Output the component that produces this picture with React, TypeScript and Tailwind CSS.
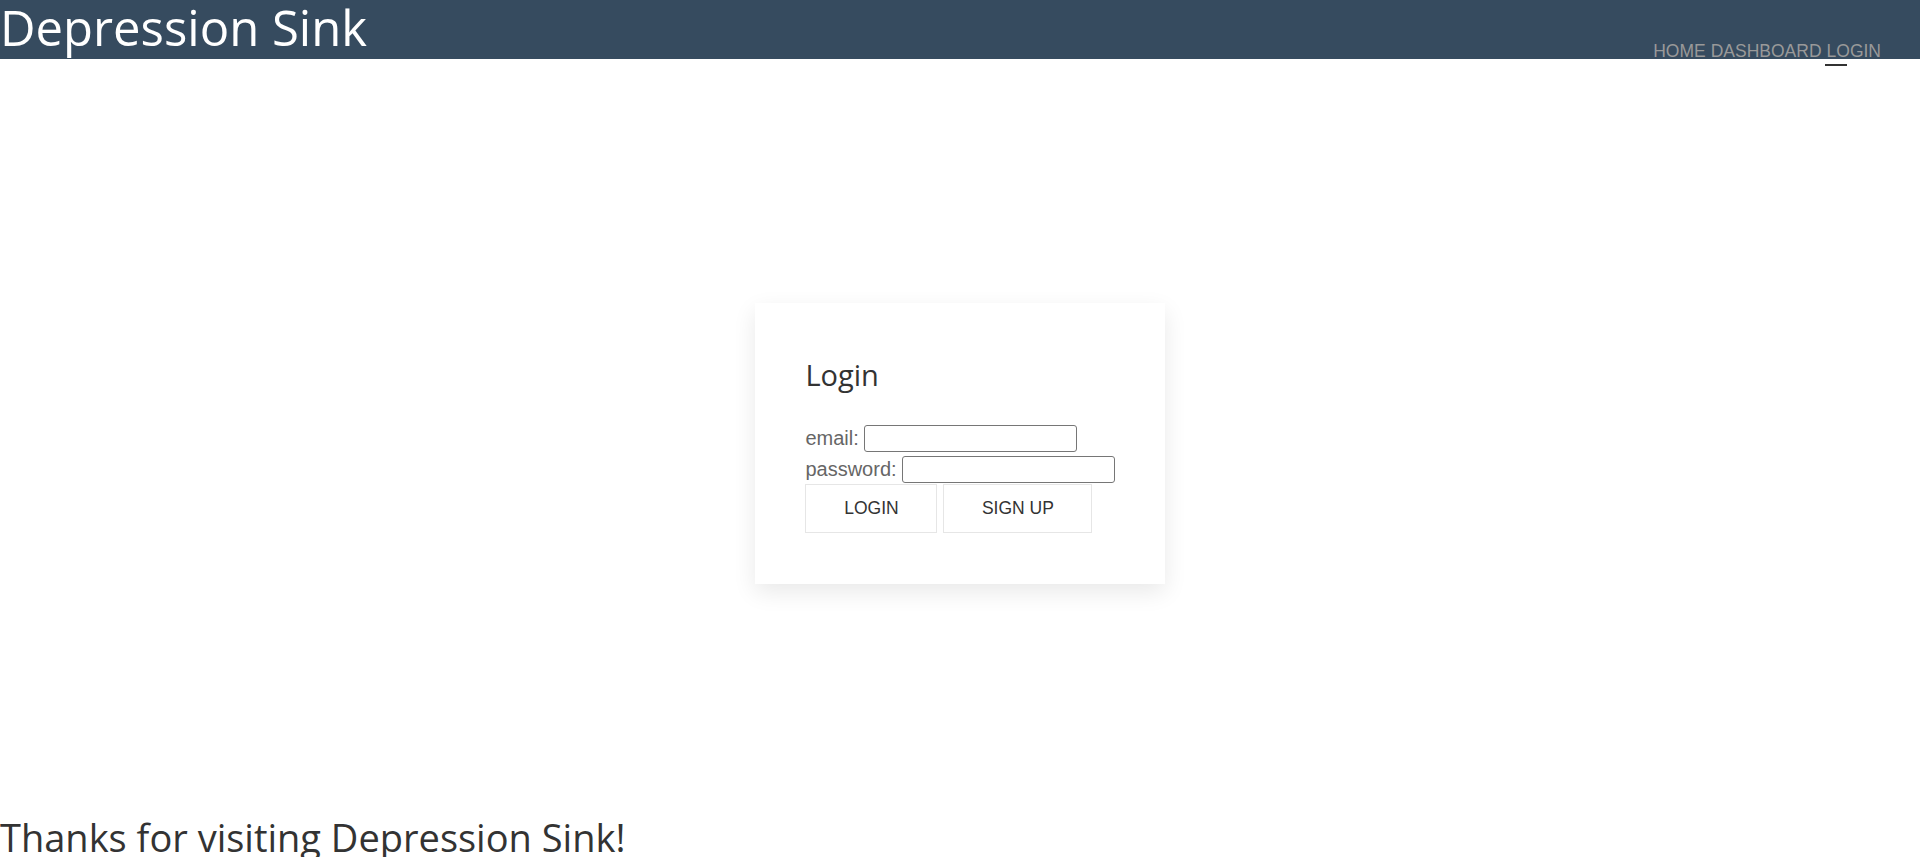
import { useState } from "react";

const NavLink = ({ label, active }: { label: string; active?: boolean }) => (
  <span className="relative">
    {label}
    {active && (
      <span className="absolute left-[-2px] top-[23px] h-[2px] w-[22px] bg-[#333]"></span>
    )}
  </span>
);

export default function App() {
  const [email, setEmail] = useState("");
  const [password, setPassword] = useState("");

  return (
    <div className="min-h-screen bg-white">
      {/* Header */}
      <header className="flex h-[59px] items-start justify-between bg-[#364b5f]">
        <h1 className="-mt-[1px] font-['Open_Sans',sans-serif] text-[49px] leading-[56px] text-white">
          Depression Sink
        </h1>
        <nav className="mr-[39px] mt-[41px] flex gap-[5px] font-['Liberation_Sans',Arial,sans-serif] text-[17.5px] leading-[20px] text-[#999]">
          <NavLink label="HOME" />
          <NavLink label="DASHBOARD" />
          <NavLink label="LOGIN" active />
        </nav>
      </header>

      {/* Main */}
      <main className="flex justify-center pb-[229px] pt-[244px]">
        <div className="bg-white px-[50px] pb-[51px] pt-[50px] shadow-[0_8px_22px_rgba(0,0,0,0.09)]">
          <h2 className="mb-[28px] font-['Open_Sans',sans-serif] text-[29px] leading-[44px] text-[#333]">
            Login
          </h2>
          <div className="flex flex-col gap-[4px] font-['Liberation_Sans',Arial,sans-serif] text-[20px] leading-[27px] text-[#666]">
            <label className="flex items-center gap-[5px]">
              email:
              <input
                type="text"
                value={email}
                onChange={(e) => setEmail(e.target.value)}
                className="h-[27px] w-[213px] rounded-[3px] border border-[#767676] bg-white px-1 text-[16px] outline-none"
              />
            </label>
            <label className="flex items-center gap-[5px]">
              password:
              <input
                type="password"
                value={password}
                onChange={(e) => setPassword(e.target.value)}
                className="h-[27px] w-[213px] rounded-[3px] border border-[#767676] bg-white px-1 text-[16px] outline-none"
              />
            </label>
          </div>
          <div className="mt-[1px] flex gap-[6px] font-['Liberation_Sans',Arial,sans-serif] text-[17.5px] text-[#333]">
            <button className="h-[49px] w-[132px] border border-[#e6e6e6] bg-white">
              LOGIN
            </button>
            <button className="h-[49px] w-[149px] border border-[#e6e6e6] bg-white">
              SIGN UP
            </button>
          </div>
        </div>
      </main>

      {/* Footer */}
      <footer>
        <p className="font-['Open_Sans',sans-serif] text-[38px] leading-[48px] text-[#333]">
          Thanks for visiting Depression Sink!
        </p>
      </footer>
    </div>
  );
}
